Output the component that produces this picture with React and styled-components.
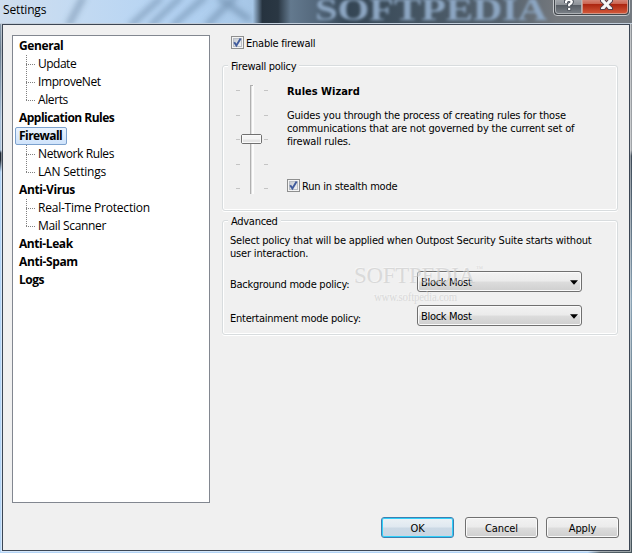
import React from "react";
import styled, { createGlobalStyle } from "styled-components";

const tree = [
  { label: "General", track: -0.4, children: [["Update", -0.5], ["ImproveNet", -0.4], ["Alerts", -0.4]] },
  { label: "Application Rules", track: -0.52 },
  { label: "Firewall", track: -0.55, selected: true, children: [["Network Rules", -0.4], ["LAN Settings", -0.2]] },
  { label: "Anti-Virus", track: -0.37, children: [["Real-Time Protection", -0.22], ["Mail Scanner", -0.33]] },
  { label: "Anti-Leak", track: -0.42 },
  { label: "Anti-Spam", track: -0.38 },
  { label: "Logs", track: -0.5 },
];

const Checkbox = ({ children }) => (
  <CheckLabel>
    <Box viewBox="0 0 13 13">
      <defs>
        <linearGradient id="checkFill" x1="0" y1="0" x2="1" y2="1">
          <stop offset="0" stopColor="#c3c8cf" />
          <stop offset="1" stopColor="#f6f6f6" />
        </linearGradient>
      </defs>
      <rect x="0.5" y="0.5" width="12" height="12" fill="#f4f4f4" stroke="#8e8f8f" />
      <rect x="2.5" y="2.5" width="8" height="8" fill="url(#checkFill)" stroke="#b9bec5" />
      <path d="M3.2 6.2 L5.4 9.4 L9.6 2.6" fill="none" stroke="#405b9c" strokeWidth="1.9" />
    </Box>
    <Label $line={15} $track={-0.22}>
      {children}
    </Label>
  </CheckLabel>
);

const Slider = () => (
  <SliderArt viewBox="0 0 34 112">
    {[6, 31, 55, 80, 104].map((y) => (
      <path key={y} d={`M1 ${y + 0.5}h4M29 ${y + 0.5}h4`} stroke="#c4c4c4" />
    ))}
    <rect x="15" y="1" width="4" height="109" fill="#fcfcfc" />
    <path d="M15.5 1v109M15 1.5h3" stroke="#b0b0b0" />
    <path d="M16.5 2v108" stroke="#e0e0e0" />
    <rect x="6.5" y="50.5" width="20" height="9" rx="1.5" fill="#e4e4e4" stroke="#707070" />
    <rect x="7.5" y="51.5" width="18" height="4" fill="#f5f5f5" />
    <rect x="7.5" y="51.5" width="18" height="7" fill="none" stroke="#fafafa" />
  </SliderArt>
);

const Select = ({ children }) => (
  <SelectBox>
    <Label $line={19} $track={-0.3}>
      {children}
    </Label>
    <Arrow viewBox="0 0 9 5">
      <path d="M0 0h9L4.5 5z" />
    </Arrow>
  </SelectBox>
);

const Glass = () => (
  <GlassArt viewBox="0 0 632 23">
    <defs>
      <linearGradient id="sky">
        <stop offset="0" stopColor="#cfdeee" />
        <stop offset="0.12" stopColor="#c3daf2" />
        <stop offset="0.28" stopColor="#b4d3f3" />
        <stop offset="0.4" stopColor="#a6c6e6" />
        <stop offset="0.415" stopColor="#26333f" />
        <stop offset="0.44" stopColor="#2a3743" />
        <stop offset="0.46" stopColor="#63798e" />
        <stop offset="0.5" stopColor="#54687c" />
        <stop offset="0.55" stopColor="#344554" />
        <stop offset="0.65" stopColor="#435361" />
        <stop offset="0.8" stopColor="#56636f" />
        <stop offset="0.88" stopColor="#74787d" />
        <stop offset="1" stopColor="#747a80" />
      </linearGradient>
      <filter id="soft" x="-20%" y="-50%" width="140%" height="200%">
        <feGaussianBlur stdDeviation="3" />
      </filter>
      <filter id="softText" x="-10%" y="-30%" width="120%" height="160%">
        <feGaussianBlur stdDeviation="1.5" />
      </filter>
    </defs>
    <rect width="632" height="23" fill="url(#sky)" />
    <g filter="url(#soft)" stroke="#4d6a88" fill="none" strokeWidth="5" opacity="0.5">
      <path d="M68 26L84 -4M130 26L162 -3M150 26L182 -4M172 26L206 -4M206 26L236 -4M218 -3L250 20" />
    </g>
    <text
      x="315"
      y="20"
      textLength="232"
      lengthAdjust="spacingAndGlyphs"
      fontFamily="Liberation Serif, serif"
      fontWeight="bold"
      fontSize="31"
      fill="#8ca6c2"
      filter="url(#softText)"
    >
      SOFTPEDIA
    </text>
  </GlassArt>
);

const CaptionButtons = () => (
  <CaptionArt viewBox="0 0 78 17">
    <defs>
      <linearGradient id="help" x2="0" y2="1">
        <stop offset="0" stopColor="#a7abb0" />
        <stop offset="0.38" stopColor="#8e9399" />
        <stop offset="0.42" stopColor="#565c63" />
        <stop offset="1" stopColor="#7b8188" />
      </linearGradient>
      <linearGradient id="close" x2="0" y2="1">
        <stop offset="0" stopColor="#d78e80" />
        <stop offset="0.33" stopColor="#cb6450" />
        <stop offset="0.38" stopColor="#ac2610" />
        <stop offset="1" stopColor="#d4593a" />
      </linearGradient>
    </defs>
    <path d="M0.5 -1V12Q0.5 15.5 4 15.5H73Q76.5 15.5 76.5 12V-1" fill="#42474d" stroke="#c6c9cc" />
    <path d="M2.5 -1H28.5V13.5H5Q2.5 13.5 2.5 11Z" fill="url(#help)" stroke="#c2c5c8" strokeWidth="0.8" />
    <path d="M29.5 -1H74.5V11Q74.5 13.5 72 13.5H29.5Z" fill="url(#close)" stroke="#e2a99b" strokeWidth="0.8" />
    <path d="M13 3V1.5Q16 -1.5 18.8 1.5Q18.8 3.5 16.2 4.5V6.4M16.2 8V10.4" fill="none" stroke="#454b55" strokeWidth="4" />
    <path d="M13 3V1.5Q16 -1.5 18.8 1.5Q18.8 3.5 16.2 4.5V6.2M16.2 8V10" fill="none" stroke="#fff" strokeWidth="2.2" />
    <path d="M47 -1h5l1.5 2 1.5 -2H60V1.5L57 4.5L60 7.5V10H55L53.5 8L52 10H47V7.5L50 4.5L47 1.5z" fill="#54404c" />
    <path d="M48 0h3.4l2.1 2.6L55.6 0h3.4v1.2L55.6 4.5L59 7.8V9H55.6L53.5 6.4L51.4 9H48V7.8L51.4 4.5L48 1.2z" fill="#f6f6f6" />
  </CaptionArt>
);

const App = () => {
  return (
    <>
      <GlobalStyle />
      <Window>
        <TitleBar>
          <Glass />
          <Title>Settings</Title>
          <CaptionButtons />
        </TitleBar>
        <Client>
          <Content>
            <Tree>
              {tree.map((group) => (
                <div key={group.label}>
                  <Parent $selected={group.selected} $track={group.track}>
                    {group.label}
                  </Parent>
                  {group.children?.map(([name, track], i) => (
                    <Child key={name} $track={track}>
                      <Branch viewBox="0 0 10 18">
                        <path
                          d={i === group.children.length - 1 ? "M0.5 0v10" : "M0.5 0v18"}
                          stroke="#808080"
                          strokeDasharray="1 1"
                        />
                        <path d="M0 9.5h9" stroke="#808080" strokeDasharray="1 1" />
                      </Branch>
                      {name}
                    </Child>
                  ))}
                </div>
              ))}
            </Tree>
            <Panel>
              <EnableRow>
                <Checkbox>Enable firewall</Checkbox>
              </EnableRow>
              <Group $height={146}>
                <Legend>Firewall policy</Legend>
                <PolicyBody>
                  <Slider />
                  <PolicyText>
                    <Heading>Rules Wizard</Heading>
                    <Paragraph>
                      <Label>Guides you through the process of creating rules for those</Label>
                      <Label>communications that are not governed by the current set of</Label>
                      <Label>firewall rules.</Label>
                    </Paragraph>
                    <Checkbox>Run in stealth mode</Checkbox>
                  </PolicyText>
                </PolicyBody>
              </Group>
              <Group $height={115}>
                <Legend>Advanced</Legend>
                <AdvancedBody>
                  <Paragraph>
                    <Label $track={-0.2}>Select policy that will be applied when Outpost Security Suite starts without</Label>
                    <Label>user interaction.</Label>
                  </Paragraph>
                  <Field>
                    <FieldName>Background mode policy:</FieldName>
                    <Select>Block Most</Select>
                  </Field>
                  <Field>
                    <FieldName>Entertainment mode policy:</FieldName>
                    <Select>Block Most</Select>
                  </Field>
                </AdvancedBody>
              </Group>
            </Panel>
          </Content>
          <Footer>
            <Button $primary>OK</Button>
            <Button $gap={11}>Cancel</Button>
            <Button $gap={8}>Apply</Button>
          </Footer>
        </Client>
        <Watermark viewBox="0 0 134 42">
          <text x="1" y="20" fontSize="23" textLength="121" lengthAdjust="spacingAndGlyphs">
            SOFTPEDIA
          </text>
          <text x="123" y="8" fontSize="7">
            ™
          </text>
          <text x="21" y="38" fontSize="12" textLength="83" lengthAdjust="spacingAndGlyphs">
            www.softpedia.com
          </text>
        </Watermark>
      </Window>
    </>
  );
};

export default App;

const GlobalStyle = createGlobalStyle`
  * {
    box-sizing: border-box;
  }
  body {
    margin: 0;
    overflow: hidden;
  }
`;

const Window = styled.div`
  position: relative;
  display: flex;
  flex-direction: column;
  width: 632px;
  height: 553px;
  padding: 0 2px 2px;
  background:
    linear-gradient(#9fb3c6 0, #6d7f90 50px, #a9c0d8 120px, #a9c0d8 150px, #1d2733 153px, #1d2733 160px, #b2d3f5 172px, #b2d3f5 100%)
      left / 2px 100% no-repeat,
    linear-gradient(#8b9095 0, #a2a6aa 150px, #3d4a57 156px, #8aa3b5 300px, #46545b 100%) right / 2px 100% no-repeat,
    linear-gradient(to right, #b5d4f5 0%, #b0d2f5 93%, #59666d 95%, #46545b 100%);
  font-family: "DejaVu Sans Condensed", "DejaVu Sans", sans-serif;
  font-size: 11px;
  letter-spacing: -0.18px;
  color: #000;
`;

const TitleBar = styled.div`
  position: relative;
  height: 24px;
  margin: 0 -2px;
  border-bottom: 1px solid #c2cedb;
`;

const GlassArt = styled.svg`
  position: absolute;
  inset: 0;
  width: 632px;
  height: 23px;
`;

const Title = styled.div`
  position: relative;
  padding: 1px 0 0 3px;
  font: 12px/18px "Open Sans", sans-serif;
  letter-spacing: -0.15px;
`;

const CaptionArt = styled.svg`
  position: absolute;
  top: 0;
  right: 1px;
  width: 78px;
  height: 17px;
`;

const Client = styled.div`
  display: flex;
  flex-direction: column;
  flex: 1;
  border: 1px solid #3c4654;
  background: #f0f0f0;
  box-shadow: 0 0 0 1px rgba(255, 255, 255, 0.45);
`;

const Content = styled.div`
  display: flex;
  gap: 12px;
  padding: 10px 11px 0 9px;
`;

const Tree = styled.div`
  width: 198px;
  height: 468px;
  padding: 1px 2px;
  border: 1px solid #828790;
  background: #fff;
  font-family: "Open Sans", sans-serif;
  font-size: 12px;
`;

const Parent = styled.div`
  width: fit-content;
  height: 18px;
  padding: 0 4px 0 3px;
  border: 1px solid ${(props) => (props.$selected ? "#7da2ce" : "transparent")};
  border-radius: 2px;
  background: ${(props) => (props.$selected ? "linear-gradient(#eaf3fe, #cfe3fb)" : "none")};
  font-weight: 700;
  line-height: 16px;
  letter-spacing: ${(props) => props.$track}px;
  white-space: nowrap;
`;

const Child = styled.div`
  display: flex;
  gap: 2px;
  height: 18px;
  padding-left: 11px;
  line-height: 18px;
  letter-spacing: ${(props) => props.$track}px;
  white-space: nowrap;
`;

const Branch = styled.svg`
  width: 10px;
  height: 18px;
`;

const Panel = styled.div`
  flex: 1;
`;

const EnableRow = styled.div`
  height: 30px;
  padding: 1px 0 0 9px;
`;

const CheckLabel = styled.div`
  display: flex;
  gap: 2px;
  height: 13px;
`;

const Box = styled.svg`
  width: 13px;
  height: 13px;
`;

const Label = styled.div`
  line-height: ${(props) => props.$line || 13}px;
  letter-spacing: ${(props) => props.$track || -0.18}px;
  white-space: nowrap;
`;

const Group = styled.div`
  height: ${(props) => props.$height}px;
  margin-bottom: 9px;
  border: 1px solid #d8dcde;
  border-radius: 3px;
  box-shadow: inset 0 0 0 1px #fff, 0 1px 0 #fff;
`;

const Legend = styled.div`
  width: fit-content;
  height: 14px;
  margin: -7px 0 0 5px;
  padding: 0 3px;
  background: #f0f0f0;
  line-height: 15px;
  letter-spacing: -0.28px;
`;

const PolicyBody = styled.div`
  display: flex;
  gap: 18px;
  padding: 11px 0 0 12px;
`;

const SliderArt = styled.svg`
  width: 34px;
  height: 112px;
`;

const PolicyText = styled.div`
  padding-top: 1px;
`;

const Heading = styled.div`
  height: 24px;
  font-weight: 700;
  line-height: 14px;
  letter-spacing: 0;
`;

const Paragraph = styled.div`
  margin-bottom: 31px;
`;

const AdvancedBody = styled.div`
  padding: 6px 0 0 7px;

  ${Paragraph} {
    margin-bottom: 11px;
  }
`;

const Field = styled.div`
  display: flex;
  height: 34px;
`;

const FieldName = styled.div`
  width: 187px;
  line-height: 27px;
  letter-spacing: -0.25px;
  white-space: nowrap;
`;

const SelectBox = styled.div`
  display: flex;
  align-items: center;
  justify-content: space-between;
  width: 165px;
  height: 21px;
  padding: 1px 3px 0;
  border: 1px solid #707070;
  border-radius: 3px;
  background: linear-gradient(#f2f2f2 0%, #ebebeb 49%, #dddddd 51%, #cfcfcf 100%);
  box-shadow: inset 0 0 0 1px #fafafa;
`;

const Arrow = styled.svg`
  width: 8px;
  height: 5px;
`;

const Footer = styled.div`
  display: flex;
  justify-content: flex-end;
  padding: 14px 10px 0 0;
`;

const Button = styled.button`
  width: 73px;
  height: 21px;
  margin-left: ${(props) => props.$gap || 0}px;
  padding: 2px 0 0;
  border: 1px solid ${(props) => (props.$primary ? "#3c7fb1" : "#707070")};
  border-radius: 3px;
  background: ${(props) =>
    props.$primary
      ? "linear-gradient(#ecf1f5 0%, #dfe8f0 49%, #cbd9e5 51%, #c9d6e3 100%)"
      : "linear-gradient(#f2f2f2 0%, #ebebeb 49%, #dddddd 51%, #cfcfcf 100%)"};
  box-shadow: inset 0 0 0 1px ${(props) => (props.$primary ? "#30d0fa" : "#fafafa")};
  font: inherit;
  line-height: 17px;
  letter-spacing: -0.1px;
`;

const Watermark = styled.svg`
  position: absolute;
  left: 353px;
  top: 263px;
  width: 134px;
  height: 42px;
  font-family: "Liberation Serif", serif;
  fill: rgba(200, 200, 200, 0.6);
  text-shadow: -1px -1px 0 rgba(255, 255, 255, 0.6);
`;
